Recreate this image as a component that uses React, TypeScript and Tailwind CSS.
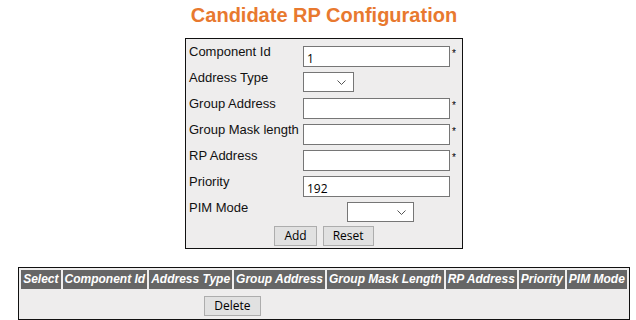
import React from 'react';

const labelFont = { fontFamily: '"Liberation Sans", Arial, sans-serif' };
const ctrlFont = { fontFamily: '"Open Sans", "Noto Sans", sans-serif' };

function Chevron() {
  return (
    <svg width="9" height="5" viewBox="0 0 9 5" className="block">
      <path d="M0.5 0.5 L4.5 4.5 L8.5 0.5" fill="none" stroke="#555" strokeWidth="1" />
    </svg>
  );
}

function TextBox({ value = '', required = false }: { value?: string; required?: boolean }) {
  return (
    <div className="flex items-start mt-[2px]">
      <input
        readOnly
        value={value}
        className="w-[147px] h-[21px] border border-[#767676] bg-white pl-[3px] pt-[4px] text-[12px] text-black outline-none"
        style={ctrlFont}
      />
      {required ? <span className="ml-[2px] mt-[3px] text-[10px] leading-[10px] text-black" style={labelFont}>*</span> : null}
    </div>
  );
}

function SelectBox({ width }: { width: string }) {
  return (
    <div className={`${width} h-[20px] border border-[#767676] bg-white flex items-center justify-end pr-[7px]`}>
      <Chevron />
    </div>
  );
}

function Row({ label, children }: { label: string; children: React.ReactNode }) {
  return (
    <div className="flex items-start h-[26px]">
      <div className="w-[114px] text-[13px] leading-[15px] text-[#111] whitespace-nowrap" style={labelFont}>
        {label}
      </div>
      <div className="w-[156px]">{children}</div>
    </div>
  );
}

function Btn({ children }: { children: React.ReactNode }) {
  return (
    <button
      className="h-[20px] px-[9px] border border-[#adadad] bg-[#e1e1e1] text-[12px] leading-[18px] text-black"
      style={ctrlFont}
    >
      {children}
    </button>
  );
}

const columns = ['Select', 'Component Id', 'Address Type', 'Group Address', 'Group Mask Length', 'RP Address', 'Priority', 'PIM Mode'];

export default function App() {
  return (
    <div className="w-[636px] h-[320px] bg-white flex flex-col items-center pl-[12px] overflow-hidden">
      <h1
        className="mt-[3px] mb-[11px] text-[20px] leading-[24px] font-bold text-[#e8792f]"
        style={labelFont}
      >
        Candidate RP Configuration
      </h1>

      <div className="w-[278px] h-[211px] border border-[#111] bg-[#eeeded] pt-[5px] pl-[3px]">
        <Row label="Component Id">
          <TextBox value="1" required />
        </Row>
        <Row label="Address Type">
          <div className="mt-[2px]">
            <SelectBox width="w-[51px]" />
          </div>
        </Row>
        <Row label="Group Address">
          <TextBox required />
        </Row>
        <Row label="Group Mask length">
          <TextBox required />
        </Row>
        <Row label="RP Address">
          <TextBox required />
        </Row>
        <Row label="Priority">
          <TextBox value="192" />
        </Row>
        <Row label="PIM Mode">
          <div className="mt-[2px] flex justify-center pr-[2px]">
            <SelectBox width="w-[67px]" />
          </div>
        </Row>
        <div className="flex justify-center gap-[6px] pr-[3px]">
          <Btn>Add</Btn>
          <Btn>Reset</Btn>
        </div>
      </div>

      <table className="mt-[18px] border border-[#111] border-separate border-spacing-[2px] bg-[#eeeded]">
        <thead>
          <tr>
            {columns.map((c) => (
              <th
                key={c}
                className="bg-[#666666] text-white font-bold italic text-[12px] leading-[15px] h-[19px] px-[2px] py-0 whitespace-nowrap"
                style={labelFont}
              >
                {c}
              </th>
            ))}
          </tr>
        </thead>
        <tbody>
          <tr>
            <td colSpan={5} className="text-center py-[1px]">
              <Btn>Delete</Btn>
            </td>
            <td colSpan={3}></td>
          </tr>
        </tbody>
      </table>
    </div>
  );
}
